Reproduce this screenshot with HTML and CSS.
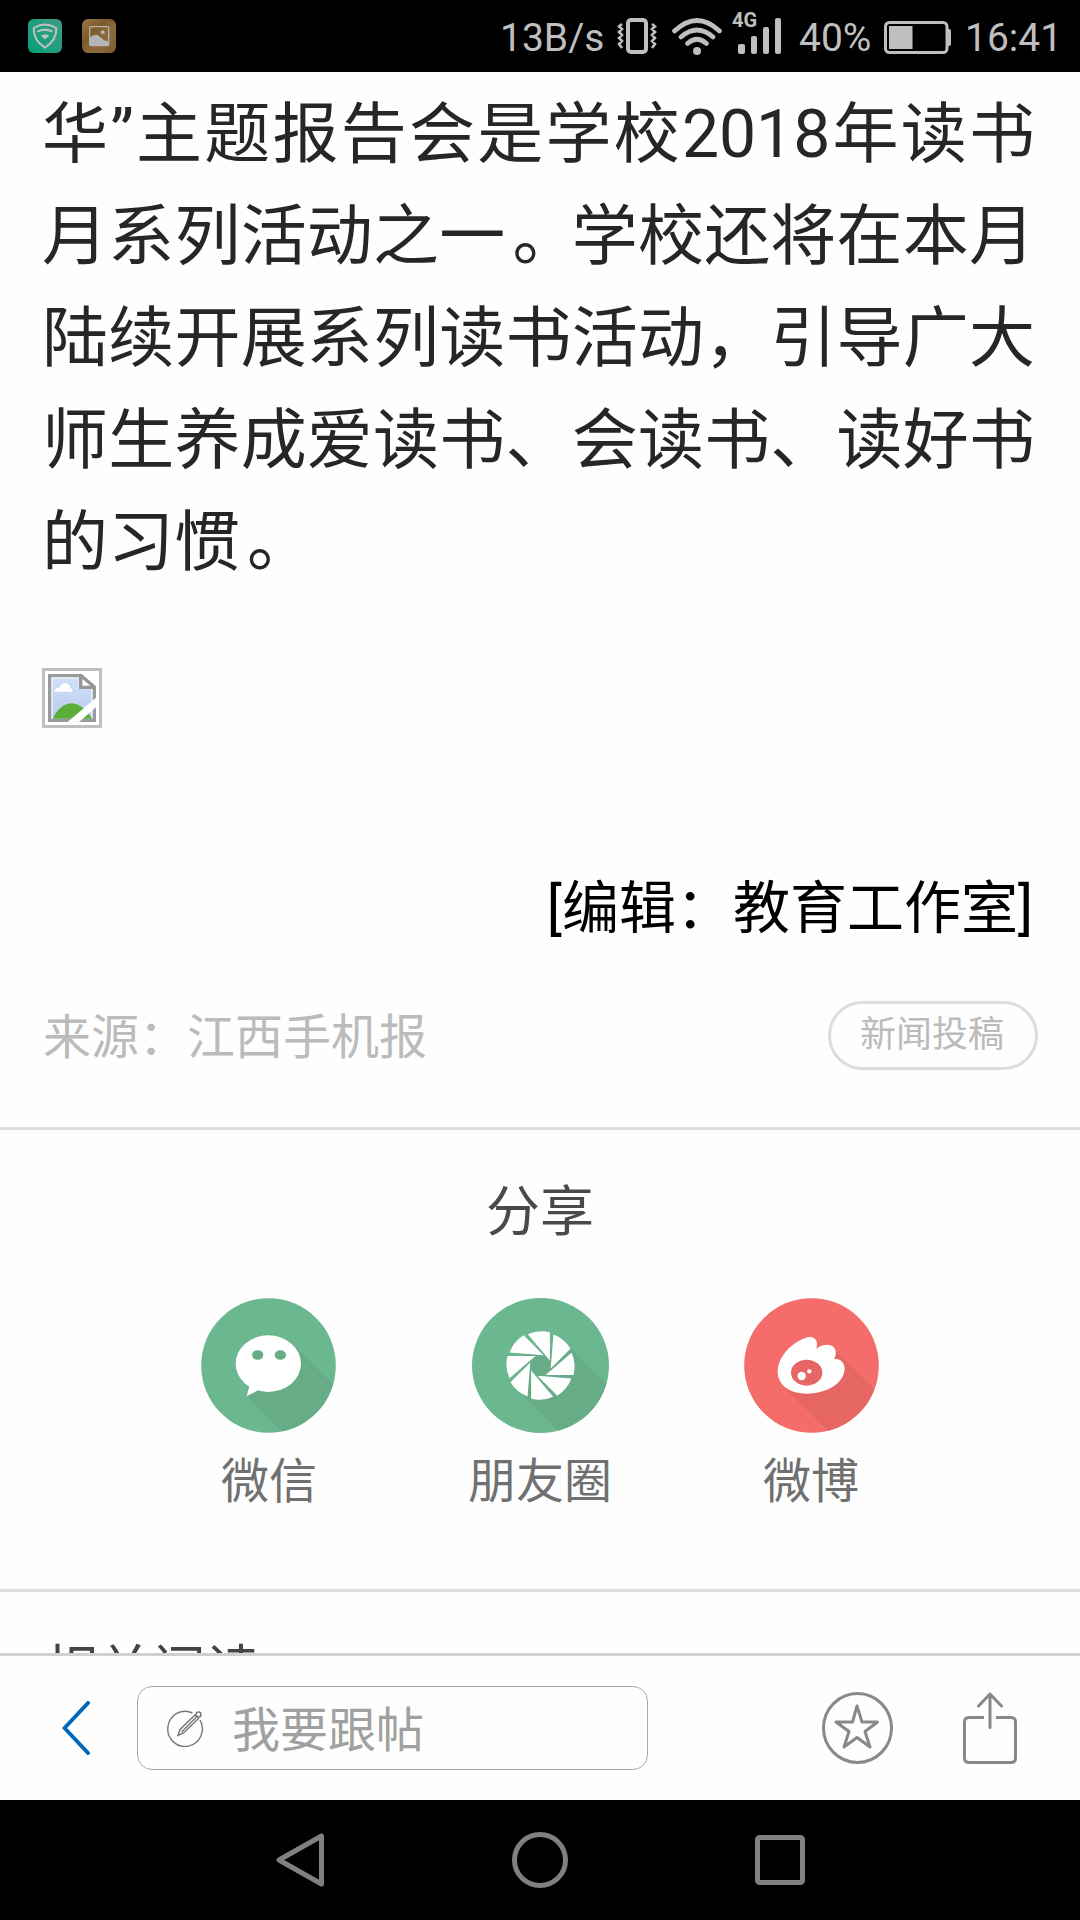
FILE: index.html
```html
<!DOCTYPE html>
<html lang="zh-CN">
<head>
<meta charset="utf-8">
<title>江西手机报</title>
<link rel="stylesheet" href="styles.css">
</head>
<body>
<div class="screen">
  <header class="status">
    <svg class="app-icon" viewBox="84 57 102 102">
      <defs><linearGradient id="g1" x1="1" y1="0" x2="0" y2="1"><stop offset="0" stop-color="#3c9c86"/><stop offset="1" stop-color="#06a077"/></linearGradient></defs>
      <rect x="84" y="57" width="102" height="102" rx="17" fill="url(#g1)"/>
      <path d="M101 84Q135 63 169 84Q170 121 135 143Q100 121 101 84Z" fill="none" stroke="#bfc4c2" stroke-width="6"/>
      <path d="M112 95Q135 84 158 95" fill="none" stroke="#bfc4c2" stroke-width="6"/>
      <path d="M122 107Q135 100 148 107L135 118Z" fill="#bfc4c2"/>
    </svg>
    <svg class="app-icon" viewBox="246 57 102 102">
      <defs><linearGradient id="g2" x1="0" y1="0" x2="1" y2="1"><stop offset="0" stop-color="#a07a48"/><stop offset=".35" stop-color="#7b5a2c"/><stop offset=".6" stop-color="#8c6a3c"/><stop offset="1" stop-color="#7d5e33"/></linearGradient></defs>
      <rect x="246" y="57" width="102" height="102" rx="19" fill="url(#g2)"/>
      <rect x="269" y="80" width="57" height="57" rx="4" fill="none" stroke="#b5b5b2" stroke-width="4"/>
      <circle cx="308" cy="97" r="6" fill="#b5b5b2"/>
      <path d="M270 112Q285 99 297 108L312 121L325 124V136H270Z" fill="#b2b6b8"/>
    </svg>
    <span class="status-text speed">13B/s</span>
    <svg class="vibrate" viewBox="0 0 40 36" fill="none" stroke="#bfbfbf">
      <rect x="11" y="2" width="18" height="32" rx="3" stroke-width="4"/>
      <path d="M5 6L2 8.500L5 11L2 14L5 17L2 20L5 23L2 26L5 30M35 6L38 8.500L35 11L38 14L35 17L38 20L35 23L38 26L35 30" stroke-width="2.600"/>
    </svg>
    <svg class="wifi" viewBox="0 0 50 37" fill="none" stroke="#bfbfbf" stroke-width="4.600" stroke-linecap="round">
      <path d="M2.500 13Q25 -8 47.500 13M9 19Q25 5 41 19M15.500 25.500Q25 17 34.500 25.500"/>
      <circle cx="25" cy="33" r="4" fill="#bfbfbf" stroke="none"/>
    </svg>
    <div class="signal">
      <span class="net">4G</span>
      <svg class="bars" viewBox="0 0 49 54" fill="#bfbfbf"><rect x="6" y="44" width="7" height="10" rx="2"/><rect x="19" y="36" width="6" height="18" rx="2"/><rect x="31" y="27" width="6" height="27" rx="2"/><rect x="43" y="18" width="6" height="36" rx="2"/></svg>
    </div>
    <span class="status-text percent">40%</span>
    <svg class="battery" viewBox="0 0 67 33"><rect x="1.500" y="1.500" width="61.500" height="30" rx="4" fill="none" stroke="#bfbfbf" stroke-width="3"/><rect x="5" y="5" width="23.500" height="23" fill="#bfbfbf"/><path d="M63 8h2q2 0 2 2v13q0 2-2 2h-2z" fill="#bfbfbf"/></svg>
    <span class="status-text clock">16:41</span>
  </header>

  <main class="content">
    <article class="article">
      <p class="body-text">华”主题报告会是学校2018年读书<br>月系列活动之一<span class="stop">。</span>学校还将在本月<br>陆续开展系列读书活动，引导广大<br>师生养成爱读书、会读书、读好书</p>
      <p class="body-text last">的习惯<span class="stop">。</span></p>
      <div class="missing">
        <svg viewBox="144 102 144 144">
          <defs><linearGradient id="sky" x1="0" y1="0" x2="0" y2="1"><stop offset="0" stop-color="#d3e1f8"/><stop offset="1" stop-color="#b7caf0"/></linearGradient></defs>
          <path d="M149 107H240L283 145V241H149Z" fill="url(#sky)" stroke="#9a9a9a" stroke-width="10"/>
          <path d="M156 114H237V146H276V234H156Z" fill="none" stroke="#eaf1fc" stroke-width="4"/>
          <path d="M158 236Q180 192 213 190Q245 188 277 236Z" fill="#5aae38"/>
          <path d="M163 155Q165 142 178 143Q184 129 197 129Q210 133 211 143Q218 147 217 155Z" fill="#fff"/>
          <path d="M242 106V142H284Z" fill="#fff" stroke="#959595" stroke-width="10"/>
          <path d="M288 173V202L237 246H203Z" fill="#fff"/>
        </svg>
      </div>
      <p class="editor">[编辑：教育工作室]</p>
      <div class="source-row"><span class="source">来源：江西手机报</span><a class="submit">新闻投稿</a></div>
    </article>
    <section class="share">
      <h2 class="share-title">分享</h2>
      <div class="share-list">
        <div class="share-item">
          <svg class="share-icon first" viewBox="63 54 405 405">
            <clipPath id="c1"><circle cx="265.500" cy="256.500" r="202"/></clipPath>
            <circle cx="265.500" cy="256.500" r="202" fill="#6bb790"/>
            <path d="M349 203L470 324V470H321L200 349Z" fill="#65ac87" clip-path="url(#c1)"/>
            <ellipse cx="265" cy="251" rx="98" ry="85" fill="#fff"/>
            <path d="M208 312V319L200 349L234 331Z" fill="#fff"/>
            <ellipse cx="233" cy="225" rx="17" ry="14.500" fill="#65ac87"/><ellipse cx="301" cy="225" rx="17" ry="14.500" fill="#65ac87"/>
          </svg>
          <span>微信</span>
        </div>
        <div class="share-item">
          <svg class="share-icon wide" viewBox="66 54 410 402" preserveAspectRatio="none">
            <clipPath id="c2"><ellipse cx="271" cy="255" rx="205" ry="201"/></clipPath>
            <ellipse cx="271" cy="255" rx="205" ry="201" fill="#6bb790"/>
            <path d="M361 204L500 340V470H345L215 342L240 240L300 230Z" fill="#65ac87" clip-path="url(#c2)"/>
            <circle cx="271" cy="255" r="58" fill="#65ac87"/>
            <g fill="#fff">
              <path id="blade" d="M299 240L233 162A102 102 0 0 1 299 156Z"/>
              <use href="#blade" transform="rotate(45 271 255)"/><use href="#blade" transform="rotate(90 271 255)"/><use href="#blade" transform="rotate(135 271 255)"/><use href="#blade" transform="rotate(180 271 255)"/><use href="#blade" transform="rotate(225 271 255)"/><use href="#blade" transform="rotate(270 271 255)"/><use href="#blade" transform="rotate(315 271 255)"/>
            </g>
          </svg>
          <span>朋友圈</span>
        </div>
        <div class="share-item">
          <svg class="share-icon" viewBox="133 54 405 405">
            <clipPath id="c3"><circle cx="335.500" cy="256.500" r="202"/></clipPath>
            <circle cx="335.500" cy="256.500" r="202" fill="#f56d6a"/>
            <path d="M404 209L540 343V470H403L262 331Z" fill="#e56663" clip-path="url(#c3)"/>
            <path d="M350 207C358 180 343 168 324 172C275 186 234 232 234 276C235 318 274 341 321 341C386 341 435 307 435 265C434 246 422 236 404 237C417 210 402 193 380 194C365 195 356 201 350 207Z" fill="#fff"/>
            <ellipse cx="321" cy="278" rx="47" ry="39" fill="#e56663"/><circle cx="306" cy="288" r="12.500" fill="#fff"/><circle cx="329" cy="274" r="6.500" fill="#fff"/>
          </svg>
          <span>微博</span>
        </div>
      </div>
    </section>
    <section class="related"><h2 class="related-title">相关阅读</h2></section>
  </main>

  <footer class="toolbar">
    <svg class="back" viewBox="0 0 28 54"><path d="M26 2L2.500 27L26 52" fill="none" stroke="#0068b9" stroke-width="4" stroke-linecap="round" stroke-linejoin="round"/></svg>
    <div class="comment">
      <svg class="pencil" viewBox="0 0 38 38" fill="none" stroke="#777" stroke-width="1.400"><path d="M26.500 4A17.300 17.600 0 1 0 34 11"/><path d="M12 26.500L14 20.500L29 6L32.500 9.500L17.500 24Z M15.500 23L30 8.500"/><circle cx="32.500" cy="5.500" r="2.500"/></svg>
      <span class="comment-hint">我要跟帖</span>
    </div>
    <svg class="star" viewBox="0 0 71 72" fill="none" stroke="#888" stroke-width="3"><ellipse cx="35.500" cy="36" rx="34" ry="34.500"/><path d="M35 14L40 30H55.500L43 39.500L48 55L35 45.500L22 55L27 39.500L14 30H30.500Z" stroke-linejoin="round"/></svg>
    <svg class="export" viewBox="0 0 54 72" fill="none" stroke="#888" stroke-width="3" stroke-linecap="round" stroke-linejoin="round"><path d="M21 25.500H6Q1.500 25.500 1.500 30V66Q1.500 70.500 6 70.500H48Q52.500 70.500 52.500 66V30Q52.500 25.500 48 25.500H33" stroke-linecap="butt"/><path d="M27 35.500V2M15.500 14L27 2L38.500 14"/></svg>
  </footer>
  <nav class="nav">
    <svg class="nav-back" viewBox="0 0 48 54"><path d="M3 27L45.500 3V51Z"/></svg>
    <svg class="nav-home" viewBox="0 0 56 56"><circle cx="28" cy="28" r="25.500"/></svg>
    <svg class="nav-recent" viewBox="0 0 50 50"><rect x="2.500" y="2.500" width="45" height="45" rx="2"/></svg>
  </nav>
</div>
</body>
</html>
```
FILE: styles.css
```css
* { box-sizing: border-box; }
body { margin: 0; font-family: Roboto, "Noto Sans CJK SC", sans-serif; background: #fff; }
svg { display: block; flex: none; }
p, h2 { margin: 0; font-weight: 400; }

.screen { width: 1080px; height: 1920px; display: flex; flex-direction: column; overflow: hidden; }

.status { height: 72px; flex: none; display: flex; align-items: flex-start; padding-left: 28px; background: #000; color: #bfbfbf; }
.app-icon { width: 34px; height: 34px; margin: 19px 20px 0 0; }
.status-text { font-size: 39px; line-height: 46px; padding-top: 15px; white-space: nowrap; flex: none; }
.speed { width: 117px; margin-left: 364px; }
.vibrate { width: 40px; height: 36px; margin: 18px 15px 0 0; }
.wifi { width: 50px; height: 37px; margin: 18px 10px 0 0; }
.signal { width: 49px; height: 54px; display: grid; flex: none; }
.signal > * { grid-area: 1 / 1; }
.net { font-size: 20px; line-height: 24px; font-weight: 700; padding-top: 8px; }
.bars { width: 49px; height: 54px; }
.percent { width: 85px; margin-left: 18px; }
.battery { width: 67px; height: 33px; margin-top: 21px; }
.clock { margin-left: 14px; }

.content { flex: 1; min-height: 0; overflow: hidden; background: #fefefe; }
.article { height: 1058px; padding: 12px 42px 0; border-bottom: 3px solid #ddd; }
.body-text { margin-right: 3px; font-size: 66px; line-height: 102px; color: #262626; text-align: justify; text-align-last: justify; }
.body-text.last { text-align-last: left; }
.stop { margin: 0 -7px 0 7px; }
.missing { width: 60px; height: 60px; margin-top: 74px; padding: 3px; border: 3px solid #c0c0c0; background: #fff; }
.missing svg { width: 48px; height: 48px; }
.editor { margin-top: 139px; padding-right: 5px; font-size: 57px; line-height: 84px; text-align: right; color: #000; }
.source-row { margin-top: 50px; height: 69px; display: flex; align-items: flex-start; justify-content: space-between; }
.source { padding-left: 1px; font-size: 48px; line-height: 73px; color: #bbb; }
.submit { width: 210px; height: 69px; padding-right: 2px; border: 3px solid #ddd; border-radius: 35px; font-size: 36px; line-height: 62px; text-align: center; color: #bbb; }

.share { height: 462px; border-bottom: 3px solid #ddd; padding-top: 43px; }
.share-title { font-size: 54px; line-height: 80px; text-align: center; color: #4a4a4a; }
.share-list { display: flex; justify-content: center; margin-top: 45px; }
.share-item { width: 271px; display: flex; flex-direction: column; align-items: center; font-size: 48px; line-height: 70px; color: #707070; }
.share-icon { width: 135px; height: 135px; margin-bottom: 14px; }
.share-icon.first { margin-right: 2px; }
.share-icon.wide { width: 137px; }
.related { padding: 40px 44px 0; }
.related-title { font-size: 54px; line-height: 80px; color: #444; }

.toolbar { height: 147px; flex: none; display: flex; align-items: center; padding-left: 62px; border-top: 3px solid #d0d0d0; background: #fefefe; }
.back { width: 28px; height: 54px; }
.comment { width: 511px; height: 84px; margin-left: 47px; display: flex; align-items: center; padding-left: 28px; gap: 28px; border: 1px solid #aaa; border-radius: 15px; font-size: 48px; line-height: 70px; color: #a0a0a0; }
.comment-hint { padding-top: 5px; }
.pencil { width: 38px; height: 38px; }
.star { width: 71px; height: 72px; margin-left: 174px; }
.export { width: 54px; height: 72px; margin-left: 70px; }

.nav { height: 120px; flex: none; display: flex; align-items: center; padding-left: 276px; background: #000; }
.nav svg { fill: none; stroke: #808080; stroke-width: 5; stroke-linejoin: round; }
.nav-back { width: 48px; height: 54px; }
.nav-home { width: 56px; height: 56px; margin-left: 188px; }
.nav-recent { width: 50px; height: 50px; margin-left: 187px; }
```
